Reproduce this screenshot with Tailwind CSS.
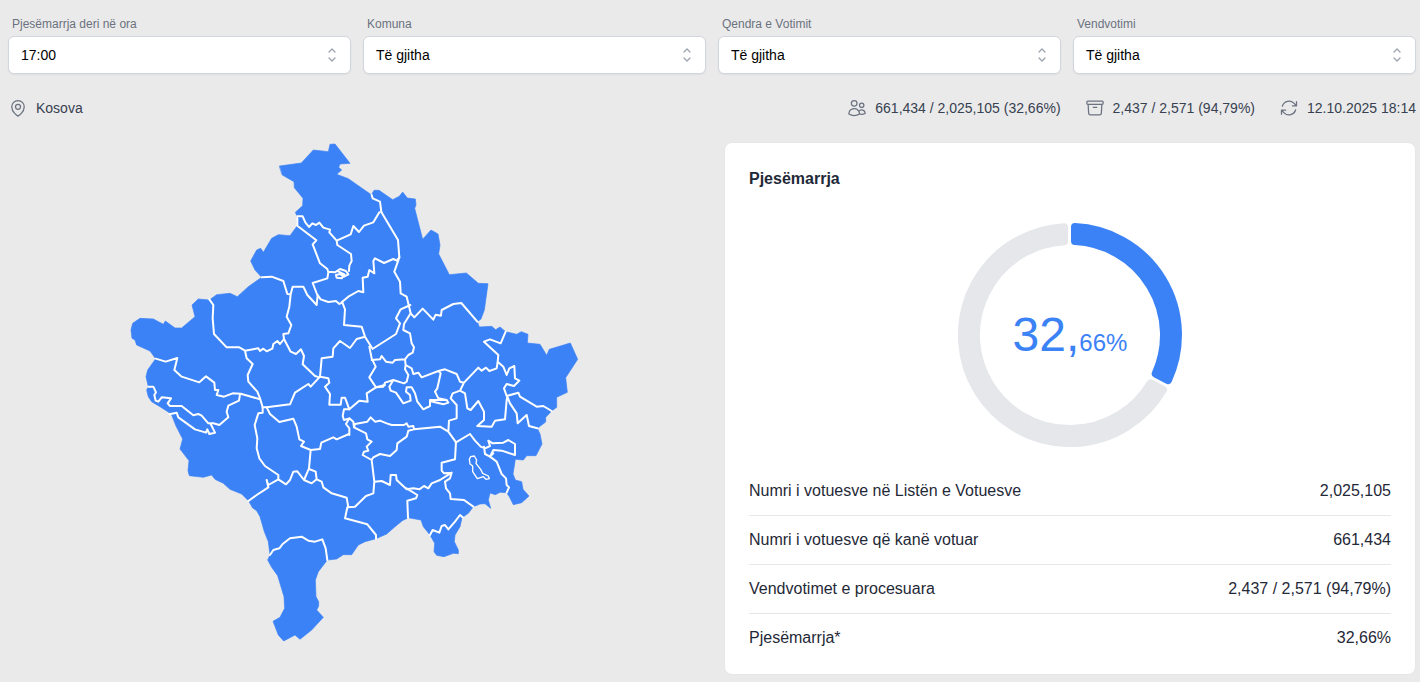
<!DOCTYPE html>
<html lang="sq">
<head>
    <meta charset="UTF-8">
    <meta name="viewport" content="width=device-width, initial-scale=1.0">
    <title>Pjesëmarrja</title>
    <script src="https://cdn.jsdelivr.net/npm/@tailwindcss/browser@4"></script>
</head>
<body class="bg-[#eaeaea] font-['Liberation_Sans',Arial,sans-serif] pt-4 pb-2 pl-2 pr-1">

<!-- Filters -->
<form class="grid grid-cols-4 gap-3">
    <div>
        <label for="ora" class="block px-1 mb-1 text-xs text-[#6b7280]">Pjesëmarrja deri në ora</label>
        <div class="relative">
            <select id="ora" class="block w-full appearance-none rounded-md border border-gray-300 bg-white py-2 pl-3 pr-10 text-sm text-black shadow-xs">
                <option>17:00</option>
            </select>
            <svg class="pointer-events-none absolute right-[9px] top-[9px] size-5 text-[#9ca3af]" viewBox="0 0 20 20" fill="none" stroke="currentColor" stroke-width="1.3" stroke-linecap="round" stroke-linejoin="round"><path d="M7 7l3-3 3 3m0 6l-3 3-3-3"/></svg>
        </div>
    </div>
    <div>
        <label for="komuna" class="block px-1 mb-1 text-xs text-[#6b7280]">Komuna</label>
        <div class="relative">
            <select id="komuna" class="block w-full appearance-none rounded-md border border-gray-300 bg-white py-2 pl-3 pr-10 text-sm text-black shadow-xs">
                <option>Të gjitha</option>
            </select>
            <svg class="pointer-events-none absolute right-[9px] top-[9px] size-5 text-[#9ca3af]" viewBox="0 0 20 20" fill="none" stroke="currentColor" stroke-width="1.3" stroke-linecap="round" stroke-linejoin="round"><path d="M7 7l3-3 3 3m0 6l-3 3-3-3"/></svg>
        </div>
    </div>
    <div>
        <label for="qendra" class="block px-1 mb-1 text-xs text-[#6b7280]">Qendra e Votimit</label>
        <div class="relative">
            <select id="qendra" class="block w-full appearance-none rounded-md border border-gray-300 bg-white py-2 pl-3 pr-10 text-sm text-black shadow-xs">
                <option>Të gjitha</option>
            </select>
            <svg class="pointer-events-none absolute right-[9px] top-[9px] size-5 text-[#9ca3af]" viewBox="0 0 20 20" fill="none" stroke="currentColor" stroke-width="1.3" stroke-linecap="round" stroke-linejoin="round"><path d="M7 7l3-3 3 3m0 6l-3 3-3-3"/></svg>
        </div>
    </div>
    <div>
        <label for="vendvotimi" class="block px-1 mb-1 text-xs text-[#6b7280]">Vendvotimi</label>
        <div class="relative">
            <select id="vendvotimi" class="block w-full appearance-none rounded-md border border-gray-300 bg-white py-2 pl-3 pr-10 text-sm text-black shadow-xs">
                <option>Të gjitha</option>
            </select>
            <svg class="pointer-events-none absolute right-[9px] top-[9px] size-5 text-[#9ca3af]" viewBox="0 0 20 20" fill="none" stroke="currentColor" stroke-width="1.3" stroke-linecap="round" stroke-linejoin="round"><path d="M7 7l3-3 3 3m0 6l-3 3-3-3"/></svg>
        </div>
    </div>
</form>

<!-- Summary row -->
<div class="mt-6 flex items-center justify-between text-sm text-[#374151]">
    <div class="flex items-center gap-2">
        <svg class="size-5 text-[#6b7280]" viewBox="0 0 24 24" fill="none" stroke="currentColor" stroke-width="1.5" stroke-linecap="round" stroke-linejoin="round"><path d="M15 10.5a3 3 0 1 1-6 0 3 3 0 0 1 6 0Z"/><path d="M19.5 10.5c0 7.142-7.5 11.25-7.5 11.25S4.5 17.642 4.5 10.5a7.5 7.5 0 1 1 15 0Z"/></svg>
        <span>Kosova</span>
    </div>
    <div class="flex items-center gap-6">
        <div class="flex items-center gap-2">
            <svg class="size-5 text-[#6b7280]" viewBox="0 0 24 24" fill="none" stroke="currentColor" stroke-width="1.5" stroke-linecap="round" stroke-linejoin="round"><path d="M15 19.128a9.38 9.38 0 0 0 2.625.372 9.337 9.337 0 0 0 4.121-.952 4.125 4.125 0 0 0-7.533-2.493M15 19.128v-.003c0-1.113-.285-2.16-.786-3.07M15 19.128v.106A12.318 12.318 0 0 1 8.624 21c-2.331 0-4.512-.645-6.374-1.766l-.001-.109a6.375 6.375 0 0 1 11.964-3.07M12 6.375a3.375 3.375 0 1 1-6.75 0 3.375 3.375 0 0 1 6.75 0Zm8.25 2.25a2.625 2.625 0 1 1-5.25 0 2.625 2.625 0 0 1 5.25 0Z"/></svg>
            <span>661,434 / 2,025,105 (32,66%)</span>
        </div>
        <div class="flex items-center gap-2">
            <svg class="size-5 text-[#6b7280]" viewBox="0 0 24 24" fill="none" stroke="currentColor" stroke-width="1.5" stroke-linecap="round" stroke-linejoin="round"><path d="m20.25 7.5-.625 10.632a2.25 2.25 0 0 1-2.247 2.118H6.622a2.25 2.25 0 0 1-2.247-2.118L3.75 7.5M10 11.25h4M3.375 7.5h17.25c.621 0 1.125-.504 1.125-1.125v-1.5c0-.621-.504-1.125-1.125-1.125H3.375c-.621 0-1.125.504-1.125 1.125v1.5c0 .621.504 1.125 1.125 1.125Z"/></svg>
            <span>2,437 / 2,571 (94,79%)</span>
        </div>
        <div class="flex items-center gap-2">
            <svg class="size-5 text-[#6b7280]" viewBox="0 0 24 24" fill="none" stroke="currentColor" stroke-width="1.5" stroke-linecap="round" stroke-linejoin="round"><path d="M16.023 9.348h4.992v-.001M2.985 19.644v-4.992m0 0h4.992m-4.993 0 3.181 3.183a8.25 8.25 0 0 0 13.803-3.7M4.031 9.865a8.25 8.25 0 0 1 13.803-3.7l3.181 3.182m0-4.991v4.99"/></svg>
            <span>12.10.2025 18:14</span>
        </div>
    </div>
</div>

<main class="mt-6 grid grid-cols-2 items-start gap-6">
    <!-- Map -->
    <svg class="mx-auto w-full max-w-[500px]" viewBox="-48 21 1500 1500" role="img" aria-label="Kosova" stroke-linejoin="round" stroke-linecap="round">
        <path fill="#3b82f6" stroke="#3b82f6" stroke-width="2" d="M479,93 544,84 580,45 625,50 630,28 645,27 690,85 660,87 656,97 665,105 650,118 685,131 755,180 758,173 762,166 777,166 818,194 838,184 848,171 862,189 886,192 888,210 884,220 908,313 933,285 954,297 960,330 956,357 988,419 1039,414 1075,445 1104,446 1093,525 1083,552 1072,560 1078,576 1115,574 1127,584 1140,576 1157,590 1190,598 1204,590 1224,598 1222,624 1260,628 1280,661 1288,643 1351,624 1373,673 1337,728 1342,772 1310,787 1310,817 1295,828 1277,847 1277,861 1252,880 1260,897 1266,927 1248,962 1220,962 1210,975 1186,973 1179,1017 1186,1035 1205,1040 1209,1063 1227,1083 1205,1103 1180,1109 1168,1085 1160,1073 1140,1072 1126,1079 1110,1074 1105,1095 1112,1120 1095,1106 1080,1107 1060,1115 1045,1135 1026,1148 1020,1175 1005,1200 1003,1220 1015,1245 1015,1256 1000,1255 972,1265 950,1261 942,1250 944,1225 930,1200 910,1175 903,1155 865,1148 847,1157 825,1175 800,1197 768,1211 735,1220 715,1230 695,1259 670,1259 650,1272 622,1275 595,1310 586,1335 588,1385 596,1400 596,1413 590,1425 610,1447 575,1485 540,1513 525,1500 491,1518 475,1500 459,1459 480,1447 494,1420 492,1385 473,1322 455,1297 443,1275 450,1260 445,1220 433,1190 420,1145 410,1127 398,1119 386,1098 365,1077 330,1063 310,1045 285,1033 275,1020 250,1027 208,1022 204,1007 207,977 180,942 188,912 168,873 155,840 148,833 120,815 95,800 85,785 80,765 85,755 78,725 83,705 107,671 90,648 50,630 45,615 36,610 33,585 38,565 60,550 100,552 130,568 136,558 165,579 185,579 225,545 216,510 235,492 268,495 290,479 330,475 352,485 385,455 425,427 405,405 392,378 410,345 422,340 430,352 455,310 475,299 510,302 532,272 532,245 526,232 548,212 549,190 523,158 522,140 487,120Z"/>
        <g fill="none" stroke="#fff" stroke-width="6">
            <!-- west -->
            <path transform="translate(0 405)" d="M107,266 137,275 172,264 163,300 185,320 238,337 258,319 283,338 285,360 295,360 290,375 312,380 338,370 362,371 420,388M360,373 357,392 325,407 320,425 325,442 298,465 280,460 265,460 245,437 235,432 220,436 185,408 150,408 143,400 153,385 125,382 115,395 107,392 103,375 108,367 100,350 85,350M148,433 170,428 175,442 225,478 258,488 262,478 268,492 285,488 272,462"/>
            <!-- north -->
            <path transform="translate(360 0)" d="M172,244 188,244 196,262 207,276 217,265 228,270 238,263 250,278 270,284 268,292 290,317 332,298 340,273 357,291 372,272 400,262 418,232M395,180 398,190 420,200 424,231M290,317 292,330 333,357 335,378 328,392 327,408M172,250V272L229,316 218,328 240,385 262,402 265,412 262,430 218,444 232,480M265,410 285,412 300,402 318,408 325,418 312,425 300,417 288,420 290,428 305,430 313,418 296,410M478,367 470,377 460,372 432,384 405,370 400,378 403,415 388,405 383,425 368,428 370,472 355,468 325,485 305,502"/>
            <!-- north-east -->
            <path transform="translate(750 135)" d="M34,96 84,180 88,232 73,275 90,305 92,340 110,350 122,400 133,412 158,386 190,419 197,404 213,407 215,390 250,372 274,369 322,425M121,375 92,388 78,415 90,430 78,462 12,504"/>
            <!-- centre -->
            <path transform="translate(240 405)" d="M28,88 40,105 38,145 42,192 80,232 118,232 135,242 175,235 180,243 190,236 200,244 217,236 220,222 232,213 240,222 252,207M185,22 215,20 250,33 262,72 272,73 268,110 260,140 274,165 265,190 250,192 252,207 272,245 288,252 303,238 312,258 308,283 345,318 358,322M272,73 278,50 310,50 322,75 350,105 353,75 362,88 385,96 408,93 418,102 427,97 435,118 432,165 485,170 495,200 518,237M495,200 470,207 450,234 420,213 400,235 398,260 365,265 360,320 385,325 388,338 375,350 390,372 388,404 422,404 425,383 435,383 448,418M358,322 332,350 325,342 285,368 270,403 200,412 188,412M135,242 140,265 158,282 143,315 145,335 172,365 180,385 188,412M508,230 515,265 527,290 508,322 528,352 500,370 503,395 478,392 448,418M528,352 555,345"/>
            <!-- east -->
            <path transform="translate(780 495)" d="M-25,180 0,178 5,168 18,185 38,188 45,180 75,178 85,165 98,158 102,142 95,130 90,100 70,90 72,72 92,40M75,178 77,195 95,205 100,222 115,218 125,232 175,213 195,208 230,222 240,245 252,248M175,213 182,220 172,265 165,275 175,295 200,300M77,195 75,208 85,225 80,245 72,250 40,240 28,260 32,272 48,278 70,310 92,302 90,285 78,275 80,262 95,262 105,280 112,305 130,328 150,318 150,300 200,300 205,308 190,313 150,303M-12,262 10,260 15,248 40,240M252,248 240,272 218,280 212,295 230,315 230,355 207,362 205,395 228,427 270,402M252,248 295,203 305,212 318,203 328,213 350,205 353,185 355,165 312,125 330,118 362,130 377,95M353,185 370,200 380,225 388,205 403,198 405,235 418,242 402,258 380,252 372,265 380,288 415,278 420,290 470,320 490,318 515,333M240,272 255,280 262,325 272,330 295,303 312,335 312,360 292,378 335,380 345,362 375,358 380,300 382,290 390,310 410,340 413,370 440,345 447,378 472,385M0,362 20,370 35,375 72,375 80,370 85,380 100,378 102,388 180,380 205,395M102,388 85,392 80,410 52,430 50,450 30,468 0,462M270,402 285,422 302,440 315,445 330,438 325,422 338,430 370,428 385,420 405,432 405,465 365,452 340,450 330,470 315,462 312,440M330,470 340,460"/>
            <!-- south-west -->
            <path transform="translate(120 795)" d="M308,22 308,38 295,40 284,75 292,115 290,145 298,175 315,198 355,225 355,238 325,255 320,240 325,262 290,285 265,303M320,22 330,42 358,66 400,56 410,80 418,118 432,125 423,138 452,150 480,147 484,128 520,112 530,118 567,102M355,238 378,253 390,240 400,215 412,214 432,240 447,205 452,150M432,240 455,250 470,238 467,215 447,207M470,238 485,245 490,262 515,280 560,293 565,322"/>
            <!-- south-east -->
            <path transform="translate(660 795)" d="M450,170 470,185 485,222 498,235 500,255 507,262 500,278M348,125 345,178 305,188 305,212 312,220 335,218 330,235 315,245 318,265 330,280 332,297 372,300 400,320M335,218 300,240 275,250 265,265 252,258 238,268 220,265 200,268 170,240 168,225 152,225 150,255 125,243 103,245M200,265 232,285 228,295 202,302 204,353M120,162 100,172 95,180 103,245 100,280 78,288 45,320 22,322 15,355 82,373 108,405 108,416M95,180 68,165 72,155 85,152 80,140 95,125 82,118 78,100 42,82 45,72 82,65 92,52 105,65 120,62M42,82 40,65 28,55 12,60 8,48 12,28 28,28M28,55 18,72 28,85 28,105M270,405 278,390 298,398 305,378 315,375 325,388 345,365 360,345 368,352"/>
            <path stroke-width="4" transform="translate(660 795)" d="M388,178 392,170 403,168 410,180 408,190 422,208 428,220 445,228 448,236 438,238 430,230 412,236 398,215 398,198 390,192Z"/>
            <!-- south -->
            <path transform="translate(360 1035)" d="M90,225 100,210 118,205 128,192 150,175 185,170 205,182 225,185 247,178 257,205 262,240"/>
        </g>
    </svg>

    <!-- Turnout card -->
    <section class="rounded-lg border border-gray-200 bg-white px-6 pt-6 pb-3 text-[#1f2937]">
        <h2 class="text-base font-bold">Pjesëmarrja</h2>
        <div class="relative mx-auto mt-8 size-56">
            <svg class="size-56" viewBox="-112 -112 224 224" stroke-width="8" stroke-linejoin="round" aria-hidden="true">
                <path fill="#3b82f6" stroke="#3b82f6" d="M5,-107.9A108,108 0 0 1 98.1,45.1L85.7,38.6A94,94 0 0 0 5,-93.9Z"/>
                <path fill="#e5e7eb" stroke="#e5e7eb" d="M93,54.8A108,108 0 1 1 -6,-107.8L-6,-93.8A94,94 0 1 0 80.6,48.3Z"/>
            </svg>
            <p class="absolute inset-0 flex items-center justify-center text-[#3b82f6]">
                <span class="text-5xl leading-none">32,<span class="text-2xl leading-none">66%</span></span>
            </p>
        </div>
        <table class="mt-5 w-full text-base">
            <tbody class="divide-y divide-gray-200">
                <tr>
                    <th scope="row" class="py-3 text-left font-normal">Numri i votuesve në Listën e Votuesve</th>
                    <td class="py-3 text-right">2,025,105</td>
                </tr>
                <tr>
                    <th scope="row" class="py-3 text-left font-normal">Numri i votuesve që kanë votuar</th>
                    <td class="py-3 text-right">661,434</td>
                </tr>
                <tr>
                    <th scope="row" class="py-3 text-left font-normal">Vendvotimet e procesuara</th>
                    <td class="py-3 text-right">2,437 / 2,571 (94,79%)</td>
                </tr>
                <tr>
                    <th scope="row" class="py-3 text-left font-normal">Pjesëmarrja*</th>
                    <td class="py-3 text-right">32,66%</td>
                </tr>
            </tbody>
        </table>
    </section>
</main>

</body>
</html>
